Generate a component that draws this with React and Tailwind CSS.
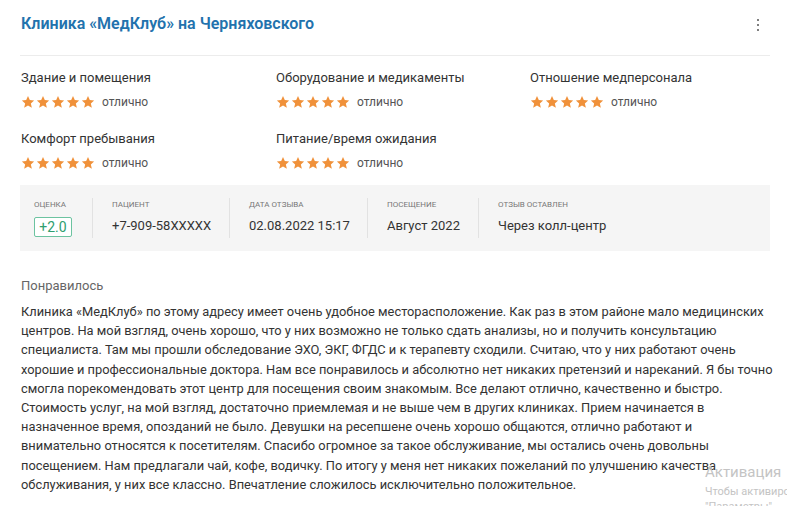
import React from 'react';

const ratings = [
  ['Здание и помещения', 'отлично'],
  ['Оборудование и медикаменты', 'отлично'],
  ['Отношение медперсонала', 'отлично'],
  ['Комфорт пребывания', 'отлично'],
  ['Питание/время ожидания', 'отлично'],
];

const reviewLines = [
  'Клиника «МедКлуб» по этому адресу имеет очень удобное месторасположение. Как раз в этом районе мало медицинских',
  'центров. На мой взгляд, очень хорошо, что у них возможно не только сдать анализы, но и получить консультацию',
  'специалиста. Там мы прошли обследование ЭХО, ЭКГ, ФГДС и к терапевту сходили. Считаю, что у них работают очень',
  'хорошие и профессиональные доктора. Нам все понравилось и абсолютно нет никаких претензий и нареканий. Я бы точно',
  'смогла порекомендовать этот центр для посещения своим знакомым. Все делают отлично, качественно и быстро.',
  'Стоимость услуг, на мой взгляд, достаточно приемлемая и не выше чем в других клиниках. Прием начинается в',
  'назначенное время, опозданий не было. Девушки на ресепшене очень хорошо общаются, отлично работают и',
  'внимательно относятся к посетителям. Спасибо огромное за такое обслуживание, мы остались очень довольны',
  'посещением. Нам предлагали чай, кофе, водичку. По итогу у меня нет никаких пожеланий по улучшению качества',
  'обслуживания, у них все классно. Впечатление сложилось исключительно положительное.',
];

const Star = () => (
  <svg className="w-[14px] h-[14px]" viewBox="0 0 24 24" fill="#f0913a">
    <path d="M12 1.8l3.1 6.9 7.4.7-5.6 5 1.7 7.4L12 18l-6.6 3.8 1.7-7.4-5.6-5 7.4-.7z" />
  </svg>
);

const Stars = () => (
  <div className="flex gap-[1px]">
    {[0, 1, 2, 3, 4].map((i) => (
      <Star key={i} />
    ))}
  </div>
);

const App = () => {
  return (
    <div className="relative w-[787px] h-[506px] bg-white overflow-hidden text-[#333]" style={{ fontFamily: 'Roboto, "Noto Sans", sans-serif' }}>
      <div className="pl-[20px] pr-[17px]">

        {/* Header */}
        <div className="flex items-start justify-between h-[56px] pt-[14px] border-b border-[#ececec]">
          <h1 className="text-[16px] leading-[20px] font-semibold text-[#2272ad] pl-[1px]">Клиника «МедКлуб» на Черняховского</h1>
          <div className="flex flex-col gap-[3px] mr-[11px] mt-[5px]">
            <span className="w-[2px] h-[2px] bg-[#555] rounded-full" />
            <span className="w-[2px] h-[2px] bg-[#555] rounded-full" />
            <span className="w-[2px] h-[2px] bg-[#555] rounded-full" />
          </div>
        </div>

        {/* Ratings */}
        <div className="grid grid-cols-[255px_254px_1fr] gap-y-[22px] pt-[14px] pl-[1px]">
          {ratings.map(([label, value]) => (
            <div key={label}>
              <div className="text-[13px] leading-[16px] text-[#333]">{label}</div>
              <div className="flex items-center gap-[7px] mt-[9px]">
                <Stars />
                <span className="text-[12px] text-[#555] leading-[14px]">{value}</span>
              </div>
            </div>
          ))}
        </div>

        {/* Info bar */}
        <div className="flex items-stretch mt-[15px] bg-[#f5f5f5] h-[66px] py-[13px] pl-[14px]">
          <div className="w-[59px] border-r border-[#e2e2e2] pt-[3px]">
            <div className="text-[8px] uppercase text-[#777] leading-none">Оценка</div>
            <div className="mt-[8px] inline-flex items-center justify-center w-[38px] h-[20px] border border-[#6cc3a0] rounded-[2px] bg-white text-[14px] text-[#2f9e6e]">+2.0</div>
          </div>
          <div className="w-[137px] pl-[19px] border-r border-[#e2e2e2] pt-[3px]">
            <div className="text-[8px] uppercase text-[#777] leading-none">Пациент</div>
            <div className="mt-[9px] text-[13px] leading-[16px] text-[#333]">+7-909-58XXXXX</div>
          </div>
          <div className="w-[138px] pl-[19px] border-r border-[#e2e2e2] pt-[3px]">
            <div className="text-[8px] uppercase text-[#777] leading-none">Дата отзыва</div>
            <div className="mt-[9px] text-[13px] leading-[16px] text-[#333]">02.08.2022 15:17</div>
          </div>
          <div className="w-[111px] pl-[19px] border-r border-[#e2e2e2] pt-[3px]">
            <div className="text-[8px] uppercase text-[#777] leading-none">Посещение</div>
            <div className="mt-[9px] text-[13px] leading-[16px] text-[#333]">Август 2022</div>
          </div>
          <div className="pl-[19px] pt-[3px]">
            <div className="text-[8px] uppercase text-[#777] leading-none">Отзыв оставлен</div>
            <div className="mt-[9px] text-[13px] leading-[16px] text-[#333]">Через колл-центр</div>
          </div>
        </div>

        {/* Review */}
        <div className="pt-[27px] pl-[1px]">
          <div className="text-[13px] leading-[16px] text-[#666]">Понравилось</div>
          <div className="mt-[8px] text-[12.85px] leading-[19.2px] text-[#333]">
            {reviewLines.map((line, i) => (
              <div key={i} className="whitespace-nowrap">{line}</div>
            ))}
          </div>
        </div>
      </div>

      {/* Windows activation watermark */}
      <div className="absolute left-[705px] top-[465px] text-[#c4c4c4] whitespace-nowrap leading-none">
        <div className="text-[15px]">Активация</div>
        <div className="text-[11px] mt-[6px]">Чтобы активировать</div>
        <div className="text-[11px] mt-[4px]">"Параметры"</div>
      </div>
    </div>
  );
};

export default App;
